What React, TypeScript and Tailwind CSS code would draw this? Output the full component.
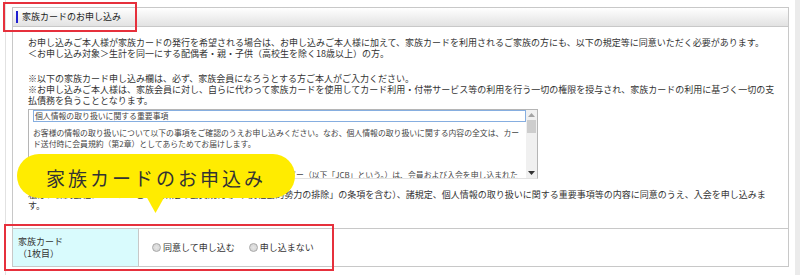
import React from 'react';

const font = "font-['Noto_Sans_CJK_JP','Noto_Sans_CJK_SC',sans-serif]";

function Radio({ label, className = '' }: { label: string; className?: string }) {
  return (
    <label className={`flex items-center ${className}`}>
      <span className="w-[9px] h-[9px] rounded-full border border-[#a8a8a8] bg-[radial-gradient(circle,#e6e6e6,#cfcfcf)]" />
      <span className="ml-[2px] text-[9px] leading-[12px] text-[#333]">{label}</span>
    </label>
  );
}

function ScrollBox() {
  return (
    <div className="mt-[3px] w-[510px] h-[70px] border border-[#b5b5b5] border-b-[#e2e2e2] flex overflow-hidden">
      <div className="flex-1 pl-[4px] overflow-hidden text-[7.85px] text-[#444] whitespace-nowrap">
        <div className="h-[12px] border border-[#86aee0] pl-[1px] leading-[10px]">個人情報の取り扱いに関する重要事項</div>
        <div className="mt-[5px] leading-[11px]">
          <div>お客様の情報の取り扱いについて以下の事項をご確認のうえお申し込みください。なお、個人情報の取り扱いに関する内容の全文は、カー</div>
          <div>ド送付時に会員規約（第2章）としてあらためてお届けします。</div>
        </div>
        <div className="mt-[9px] leading-[11px]">
          <div>１．個人情報の収集・保有・利用・預託</div>
          <div>第1条（個人情報の収集・保有・利用・預託）私は、株式会社ジェーシービー（以下「JCB」という。）は、会員および入会を申し込まれた</div>
        </div>
      </div>
      <div className="w-[11px] bg-[#f0f0f0] flex flex-col">
        <div className="h-[10px] flex items-center justify-center">
          <svg width="7" height="4" viewBox="0 0 7 4"><polygon points="0,4 7,4 3.5,0" fill="#a3a3a3" /></svg>
        </div>
        <div className="h-[13px] mx-[1px] bg-[#cdcdcd]" />
        <div className="flex-1" />
        <div className="h-[10px] flex items-center justify-center">
          <svg width="7" height="4" viewBox="0 0 7 4"><polygon points="0,0 7,0 3.5,4" fill="#333" /></svg>
        </div>
      </div>
    </div>
  );
}

export default function App() {
  return (
    <div className={`relative w-[800px] h-[275px] bg-white overflow-hidden flex ${font}`}>
      <div className="w-[5px]" />
      <div className="w-[790px] border-l border-[#e2e2e2] pl-[6px] pt-[7px]">
        <div className="w-[777px] border border-[#c8c8c8]">
          <div className="h-[19px] flex items-center pl-[3px] border-b border-[#c8c8c8] bg-gradient-to-b from-white to-[#e2e2e2]">
            <span className="w-[2px] h-[12px] bg-[#1f1fd0]" />
            <span className="ml-[4px] text-[9px] leading-[12px] text-[#222]">家族カードのお申し込み</span>
          </div>

          <div className="pl-[15px] pt-[10px] pb-[17px] text-[9px] leading-[11px] text-[#333] whitespace-nowrap">
            <div>
              <div>お申し込みご本人様が家族カードの発行を希望される場合は、お申し込みご本人様に加えて、家族カードを利用されるご家族の方にも、以下の規定等に同意いただく必要があります。</div>
              <div>＜お申し込み対象＞生計を同一にする配偶者・親・子供（高校生を除く18歳以上）の方。</div>
            </div>
            <div className="mt-[14px]">
              <div>※以下の家族カード申し込み欄は、必ず、家族会員になろうとする方ご本人がご入力ください。</div>
              <div>※お申し込みご本人様は、家族会員に対し、自らに代わって家族カードを使用してカード利用・付帯サービス等の利用を行う一切の権限を授与され、家族カードの利用に基づく一切の支</div>
              <div>払債務を負うこととなります。</div>
            </div>
            <ScrollBox />
            <div className="mt-[10px]">
              <div>私は、株式会社ジェーシービーの所定の会員規約等（「反社会的勢力の排除」の条項を含む）、諸規定、個人情報の取り扱いに関する重要事項等の内容に同意のうえ、入会を申し込みま</div>
              <div>す。</div>
            </div>
          </div>

          <div className="flex h-[38px] border-t border-[#c8c8c8]">
            <div className="w-[126px] border-r border-[#c8c8c8] bg-[#d9fbfd] pl-[5px] flex flex-col justify-center text-[9px] leading-[12px] text-[#333]">
              <span>家族カード</span>
              <span>（1枚目）</span>
            </div>
            <div className="flex items-center pl-[13px]">
              <Radio label="同意して申し込む" />
              <Radio label="申し込まない" className="ml-[14px]" />
            </div>
          </div>
        </div>
      </div>
      <div className="w-[5px] bg-[#ebebeb]" />

      {/* callout bubble */}
      <div className="absolute left-[17px] top-[154px] w-[278px] h-[44px] rounded-[22px] bg-[#ffec00] flex items-center justify-center pt-[3px]">
        <span className="text-[19px] leading-[24px] tracking-[3px] text-[#333]">家族カードのお申込み</span>
      </div>
      <svg className="absolute left-[146px] top-[196px]" width="19" height="17" viewBox="0 0 19 17">
        <polygon points="0,0 19,0 9.5,17" fill="#ffec00" />
      </svg>

      {/* red annotation frames */}
      <div className="absolute left-[3px] top-[2px] w-[134px] h-[30px] border-2 border-[#e6303c]" />
      <div className="absolute left-[4px] top-[224px] w-[330px] h-[47px] border-2 border-[#e6303c]" />
    </div>
  );
}
